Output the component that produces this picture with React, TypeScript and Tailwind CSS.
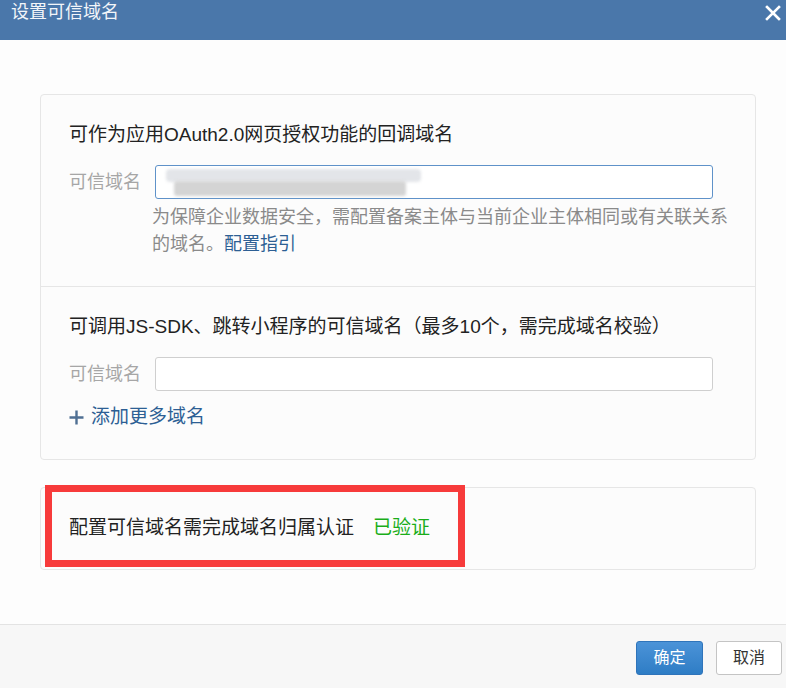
import React from 'react';

const font = { fontFamily: '"Liberation Sans", "Noto Sans CJK SC", sans-serif' };

export default function App() {
  return (
    <div className="flex h-[688px] w-[786px] flex-col overflow-hidden bg-[#fdfdfd]" style={font}>
      {/* 标题栏 */}
      <div className="flex h-[40px] shrink-0 items-start justify-between bg-[#4a77aa] pl-[11px] pr-[5px]">
        <span className="text-[18px] leading-[24px] text-[#f2f5f9]">设置可信域名</span>
        <svg width="16" height="16" viewBox="0 0 16 16" className="mt-[5px]">
          <path d="M2 2 L14 14 M14 2 L2 14" stroke="#ffffff" strokeWidth="2.6" strokeLinecap="square" />
        </svg>
      </div>

      <div className="flex-1 pl-[40px] pr-[30px] pt-[54px]">
        <div className="rounded-[4px] border border-[#e6e6e6] bg-[#fcfcfc]">
          {/* OAuth 回调域名 */}
          <div className="border-b border-[#e6e6e6] pb-[28px] pl-[28px] pr-[42px] pt-[28px]">
            <p className="text-[19px] leading-[24px] text-[#222]">可作为应用OAuth2.0网页授权功能的回调域名</p>
            <div className="mt-[18px] flex items-center">
              <span className="w-[86px] text-[18px] text-[#a6a6a6]">可信域名</span>
              <div className="relative h-[34px] flex-1 rounded-[3px] border border-[#5f92c9] bg-white">
                <div className="absolute left-[10px] top-[3px] h-[13px] w-[255px] rounded-[4px] bg-[#e3e5e9] blur-[1.5px]" />
                <div className="absolute left-[18px] top-[15px] h-[15px] w-[232px] rounded-[3px] bg-[#d4d4d4] blur-[1.5px]" />
              </div>
            </div>
            <p className="ml-[83px] mt-[5px] whitespace-nowrap text-[18px] leading-[27px] text-[#8a8a8a]">
              为保障企业数据安全，需配置备案主体与当前企业主体相同或有关联关系
              <br />
              的域名。<span className="text-[#2d5f94]">配置指引</span>
            </p>
          </div>

          {/* JS-SDK 可信域名 */}
          <div className="pb-[30px] pl-[28px] pr-[42px] pt-[28px]">
            <p className="text-[19px] leading-[24px] text-[#222]">
              可调用JS-SDK、跳转小程序的可信域名（最多10个，需完成域名校验）
            </p>
            <div className="mt-[18px] flex items-center">
              <span className="w-[86px] text-[18px] text-[#a6a6a6]">可信域名</span>
              <div className="h-[34px] flex-1 rounded-[3px] border border-[#cfcfcf] bg-white" />
            </div>
            <div className="mt-[14px] flex items-center gap-[7px] text-[19px] leading-[24px] text-[#2d5f94]">
              <svg width="15" height="15" viewBox="0 0 15 15">
                <path d="M7.5 0.5 V14.5 M0.5 7.5 H14.5" stroke="#4f6f93" strokeWidth="2.4" />
              </svg>
              <span>添加更多域名</span>
            </div>
          </div>
        </div>

        {/* 域名归属认证 */}
        <div className="relative mt-[27px] flex h-[83px] items-center rounded-[4px] border border-[#e6e6e6] bg-[#fcfcfc] pl-[28px]">
          <span className="text-[19px] text-[#222]">配置可信域名需完成域名归属认证</span>
          <span className="ml-[19px] text-[19px] text-[#1aad19]">已验证</span>
          <div className="absolute left-[4px] top-[-3px] h-[82px] w-[420px] border-[7px] border-[#f73b3b]" />
        </div>
      </div>

      {/* 底部按钮 */}
      <div className="flex h-[64px] shrink-0 items-start justify-end gap-[13px] border-t border-[#e3e3e3] bg-[#f7f7f7] pr-[4px] pt-[16px]">
        <button className="h-[34px] w-[67px] rounded-[3px] border border-[#2f74ba] bg-gradient-to-b from-[#4b93d8] to-[#2e7dc5] text-[16px] text-white">
          确定
        </button>
        <button className="h-[34px] w-[66px] rounded-[3px] border border-[#c4c4c4] bg-white text-[16px] text-[#333]">
          取消
        </button>
      </div>
    </div>
  );
}
